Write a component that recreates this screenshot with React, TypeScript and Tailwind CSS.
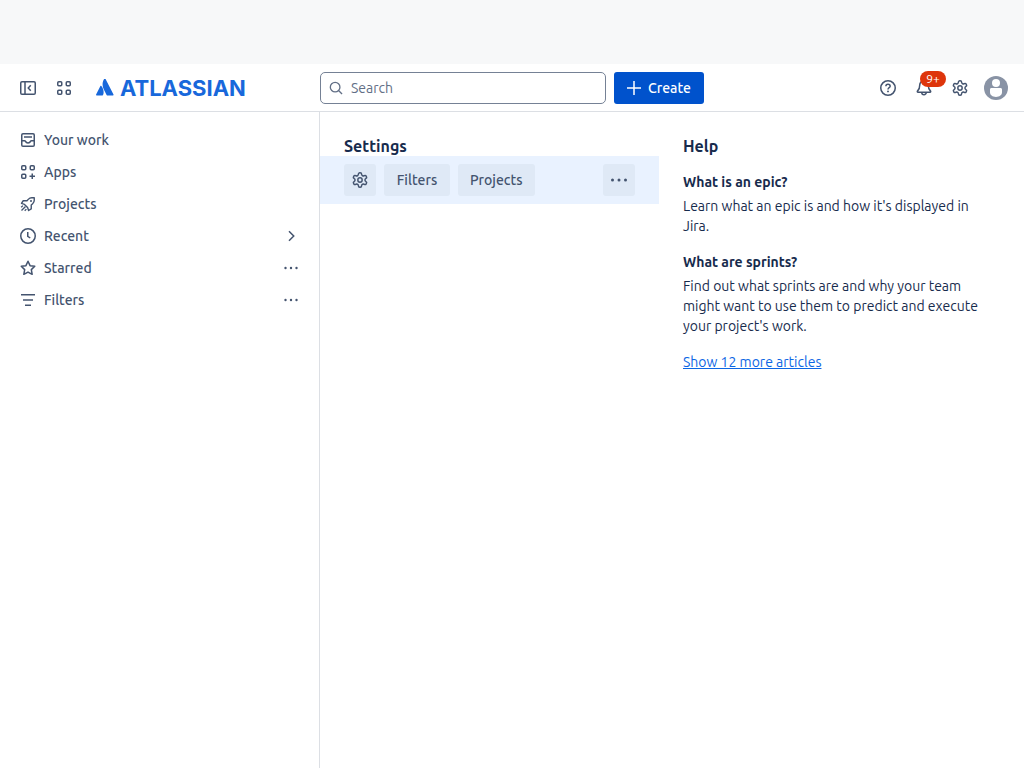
import type { ReactNode } from "react";

type IconProps = { children: ReactNode; className?: string };

function Icon({ children, className = "size-4" }: IconProps) {
  return (
    <svg
      viewBox="0 0 16 16"
      fill="none"
      stroke="currentColor"
      strokeWidth="1.5"
      aria-hidden="true"
      className={`shrink-0 ${className}`}
    >
      {children}
    </svg>
  );
}

function CollapseIcon() {
  return (
    <Icon>
      <rect x="0.75" y="1.75" width="14.5" height="12.5" rx="1.25" />
      <path d="M5 2v12M10.75 5.25 8.25 8l2.5 2.75" />
    </Icon>
  );
}

function AppSwitcherIcon() {
  return (
    <Icon>
      <rect x="1.75" y="1.75" width="4" height="4" rx="1" />
      <rect x="10.25" y="1.75" width="4" height="4" rx="1" />
      <rect x="1.75" y="10.25" width="4" height="4" rx="1" />
      <rect x="10.25" y="10.25" width="4" height="4" rx="1" />
    </Icon>
  );
}

function AtlassianMark() {
  return (
    <svg viewBox="0 0 18 18" fill="#1868db" aria-hidden="true" className="size-[18px] shrink-0">
      <path d="M5.3 7c-.3-.3-.7-.3-.9.1L.1 15.6c-.2.4.1.8.5.8h5.9c.2 0 .4-.1.5-.3 1.3-2.6.5-6.600-1.700-9.100Z" />
      <path d="M8.400-.5C6 3.200 6.200 7.200 7.700 10.300l2.900 5.800c.1.200.3.300.5.300H17c.4 0 .7-.400.5-.8L9.300-.5c-.2-.4-.7-.4-.9 0Z" />
    </svg>
  );
}

function SearchIcon() {
  return (
    <Icon className="size-3.5">
      <circle cx="7" cy="7" r="5.500" />
      <path d="m10.900 10.900 4 4" />
    </Icon>
  );
}

function HelpIcon() {
  return (
    <Icon>
      <circle cx="8" cy="8" r="7.25" />
      <path d="M5.900 6.300C5.900 5 6.800 4.200 8 4.200s2.150.8 2.150 1.950C10.150 7.600 8 7.700 8 9.400" />
      <circle cx="8" cy="11.400" r="0.95" fill="currentColor" stroke="none" />
    </Icon>
  );
}

function BellIcon() {
  return (
    <Icon>
      <path
        d="M8 .75A4.250 4.250 0 0 0 3.750 5c0 3.200-.9 4.700-2.100 5.900-.6.6-.4 1.350.4 1.350h11.900c.8 0 1-.75.4-1.350-1.200-1.200-2.100-2.700-2.100-5.900A4.250 4.250 0 0 0 8 .75Z"
        strokeLinejoin="round"
      />
      <path d="M5.750 12.500a2.250 2.250 0 0 0 4.500 0" />
    </Icon>
  );
}

function GearIcon() {
  return (
    <svg
      viewBox="1 1 22 22"
      fill="none"
      stroke="currentColor"
      strokeWidth="2"
      strokeLinejoin="round"
      aria-hidden="true"
      className="size-4 shrink-0"
    >
      <path d="M12.220 2h-.44a2 2 0 0 0-2 2v.18a2 2 0 0 1-1 1.730l-.43.250a2 2 0 0 1-2 0l-.15-.08a2 2 0 0 0-2.730.730l-.22.380a2 2 0 0 0 .730 2.730l.150.100a2 2 0 0 1 1 1.720v.510a2 2 0 0 1-1 1.740l-.15.090a2 2 0 0 0-.73 2.730l.220.380a2 2 0 0 0 2.730.730l.150-.08a2 2 0 0 1 2 0l.430.250a2 2 0 0 1 1 1.730V20a2 2 0 0 0 2 2h.44a2 2 0 0 0 2-2v-.18a2 2 0 0 1 1-1.730l.430-.25a2 2 0 0 1 2 0l.150.080a2 2 0 0 0 2.730-.73l.220-.39a2 2 0 0 0-.73-2.730l-.15-.08a2 2 0 0 1-1-1.740v-.5a2 2 0 0 1 1-1.740l.150-.09a2 2 0 0 0 .730-2.730l-.22-.38a2 2 0 0 0-2.730-.73l-.15.080a2 2 0 0 1-2 0l-.43-.25a2 2 0 0 1-1-1.730V4a2 2 0 0 0-2-2z" />
      <circle cx="12" cy="12" r="3" />
    </svg>
  );
}

function Avatar() {
  return (
    <svg viewBox="0 0 24 24" aria-hidden="true" className="size-6">
      <circle cx="12" cy="12" r="12" fill="#8993a5" />
      <circle cx="12" cy="7" r="4" fill="#fff" />
      <path d="M6 13.500c0-1 .7-1.500 1.500-1.500h9c.8 0 1.500.5 1.500 1.500v2.800c0 2.700-2.500 4.700-6 4.700s-6-2-6-4.700v-2.800Z" fill="#fff" />
    </svg>
  );
}

function InboxIcon() {
  return (
    <Icon>
      <rect x="1.750" y="1.750" width="12.500" height="12.500" rx="1.250" />
      <path d="M4 5h8M2 8.750h2.500c.5 0 .8.250 1 .65.400 1 1.300 1.600 2.500 1.600s2.100-.6 2.500-1.600c.2-.4.5-.65 1-.65H14" />
    </Icon>
  );
}

function AppsIcon() {
  return (
    <Icon>
      <rect x="1.750" y="1.750" width="4" height="4" rx="1" />
      <rect x="10.250" y="1.750" width="4" height="4" rx="1" />
      <rect x="1.750" y="10.250" width="4" height="4" rx="1" />
      <path d="M12.250 9.500v5.500M9.500 12.250H15" />
    </Icon>
  );
}

function RocketIcon() {
  return (
    <Icon>
      <path
        d="M14.250 1.750h-2.500c-1.500 0-2.500.5-3.500 1.600L7 4.750H3.200L1.500 7.400l3 1 3.100 3.100 1 3 2.650-1.700V9l1.400-1.250c1.100-1 1.600-2 1.600-3.500v-2.500Z"
        strokeWidth="1.400"
        strokeLinejoin="round"
      />
      <path d="m1.500 14.500 4-4M1.200 11.300l1.700-1.700M4.700 14.800l1.700-1.700" strokeWidth="1.300" />
      <circle cx="11" cy="5" r="1" fill="currentColor" stroke="none" />
    </Icon>
  );
}

function ClockIcon() {
  return (
    <Icon>
      <circle cx="8" cy="8" r="7.250" />
      <path d="M7.750 4v4.250l2.500 1.750" />
    </Icon>
  );
}

function StarIcon() {
  return (
    <Icon>
      <path
        d="m8 1.300 2.050 4.350 4.700.65-3.430 3.300.85 4.700L8 12.050 3.830 14.300l.85-4.700L1.250 6.300l4.700-.65L8 1.300Z"
        strokeLinejoin="round"
      />
    </Icon>
  );
}

function FiltersIcon() {
  return (
    <Icon>
      <path d="M1 2.750h14M3 8h10M5 13.250h6" />
    </Icon>
  );
}

function MoreIcon({ radius }: { radius: number }) {
  return (
    <svg viewBox="0 0 20 16" fill="currentColor" aria-hidden="true" className="h-4 w-5 shrink-0">
      <circle cx={radius > 1.2 ? 3.5 : 4.5} cy="8" r={radius} />
      <circle cx="10" cy="8" r={radius} />
      <circle cx={radius > 1.2 ? 16.5 : 15.5} cy="8" r={radius} />
    </svg>
  );
}

function ChevronRightIcon() {
  return (
    <svg viewBox="0 0 20 16" fill="none" stroke="currentColor" strokeWidth="1.500" aria-hidden="true" className="h-4 w-5 shrink-0">
      <path d="m8 3.250 4.750 4.750L8 12.750" />
    </svg>
  );
}

const navItems = [
  { label: "Your work", icon: <InboxIcon /> },
  { label: "Apps", icon: <AppsIcon /> },
  { label: "Projects", icon: <RocketIcon /> },
  { label: "Recent", icon: <ClockIcon />, action: "Expand recent", actionIcon: <ChevronRightIcon /> },
  { label: "Starred", icon: <StarIcon />, action: "More starred actions", actionIcon: <MoreIcon radius={1.2} /> },
  { label: "Filters", icon: <FiltersIcon />, action: "More filter actions", actionIcon: <MoreIcon radius={1.2} /> },
];

const articles = [
  { title: "What is an epic?", text: "Learn what an epic is and how it's displayed in Jira." },
  {
    title: "What are sprints?",
    text: "Find out what sprints are and why your team might want to use them to predict and execute your project's work.",
  },
];

const iconButton = "flex size-8 shrink-0 items-center justify-center rounded-[3px]";
const toolButton = "flex h-8 items-center justify-center rounded-[3px] bg-[#dfe9f6] text-sm/5 font-medium";

function Header() {
  return (
    <header className="flex h-12 items-center border-b border-[#dcdfe4] bg-white text-[#44546f]">
      <div className="flex w-80 shrink-0 items-center gap-1 pl-3">
        <button type="button" aria-label="Collapse sidebar" className={iconButton}>
          <CollapseIcon />
        </button>
        <button type="button" aria-label="Switch apps" className={iconButton}>
          <AppSwitcherIcon />
        </button>
        <a href="#home" className="ml-3 flex items-center gap-1.5">
          <AtlassianMark />
          <span className="font-['Inter',sans-serif] text-[22px]/7 font-bold text-[#1868db]">ATLASSIAN</span>
        </a>
      </div>
      <div className="flex max-w-96 grow items-center gap-2">
        <label className="flex h-8 min-w-0 grow items-center gap-2 rounded-[5px] border border-[#758195] bg-white pl-2 text-[#626f86]">
          <SearchIcon />
          <input
            type="search"
            aria-label="Search"
            placeholder="Search"
            className="min-w-0 grow bg-transparent text-sm/5 outline-none placeholder:text-[#626f86]"
          />
        </label>
        <button
          type="button"
          className="flex h-8 w-[90px] shrink-0 items-center gap-1.5 rounded-[3px] bg-[#0052cc] pl-3 text-sm/5 font-medium text-white"
        >
          <Icon>
            <path d="M8 1v14M1 8h14" strokeWidth="1.500" />
          </Icon>
          Create
        </button>
      </div>
      <div className="ml-auto flex shrink-0 items-center gap-1 pr-3">
        <button type="button" aria-label="Help" className={iconButton}>
          <HelpIcon />
        </button>
        <button type="button" aria-label="Notifications" className={`relative ${iconButton}`}>
          <BellIcon />
          <span className="absolute -top-px left-3 flex h-4 w-[26px] items-center justify-center rounded-full bg-[#de350b] text-xs/4 text-white">
            9+
          </span>
        </button>
        <button type="button" aria-label="Settings" className={iconButton}>
          <GearIcon />
        </button>
        <button type="button" aria-label="Your profile" className={iconButton}>
          <Avatar />
        </button>
      </div>
    </header>
  );
}

function Sidebar() {
  return (
    <nav aria-label="Main" className="w-80 shrink-0 border-r border-[#dcdfe4] p-3 text-[#44546f]">
      <ul>
        {navItems.map((item) => (
          <li key={item.label} className="flex h-8 items-center justify-between pr-1.5 pl-2">
            <a href={`#${item.label.toLowerCase().replace(" ", "-")}`} className="flex grow items-center gap-2 text-sm/5 font-medium">
              {item.icon}
              {item.label}
            </a>
            {item.action && (
              <button type="button" aria-label={item.action}>
                {item.actionIcon}
              </button>
            )}
          </li>
        ))}
      </ul>
    </nav>
  );
}

export default function App() {
  return (
    <div className="flex min-h-screen flex-col bg-white font-['Ubuntu','Noto_Sans',sans-serif] text-[#172b4d]">
      <div className="h-16 bg-[#f7f8f9]" />
      <Header />
      <div className="flex grow">
        <Sidebar />
        <main className="min-w-0 grow pt-6">
          <h1 className="px-6 text-base/5 font-bold">Settings</h1>
          <div className="flex items-center gap-2 bg-[#e9f2ff] px-6 py-2 text-[#44546f]">
            <button type="button" aria-label="Configure" className={`w-8 ${toolButton}`}>
              <GearIcon />
            </button>
            <button type="button" className={`min-w-[66px] px-3 ${toolButton}`}>
              Filters
            </button>
            <button type="button" className={`min-w-[66px] px-3 ${toolButton}`}>
              Projects
            </button>
            <button type="button" aria-label="More actions" className={`ml-auto w-8 ${toolButton}`}>
              <MoreIcon radius={1.5} />
            </button>
          </div>
        </main>
        <aside className="w-[365px] shrink-0 py-6 pr-10 pl-6">
          <h2 className="text-base/5 font-bold">Help</h2>
          <div className="mt-4 flex flex-col gap-4 text-sm/5">
            {articles.map((article) => (
              <section key={article.title} className="flex flex-col gap-1">
                <h3 className="font-bold">{article.title}</h3>
                <p>{article.text}</p>
              </section>
            ))}
            <a href="#articles" className="self-start text-[#0c66e4] underline">
              Show 12 more articles
            </a>
          </div>
        </aside>
      </div>
    </div>
  );
}
